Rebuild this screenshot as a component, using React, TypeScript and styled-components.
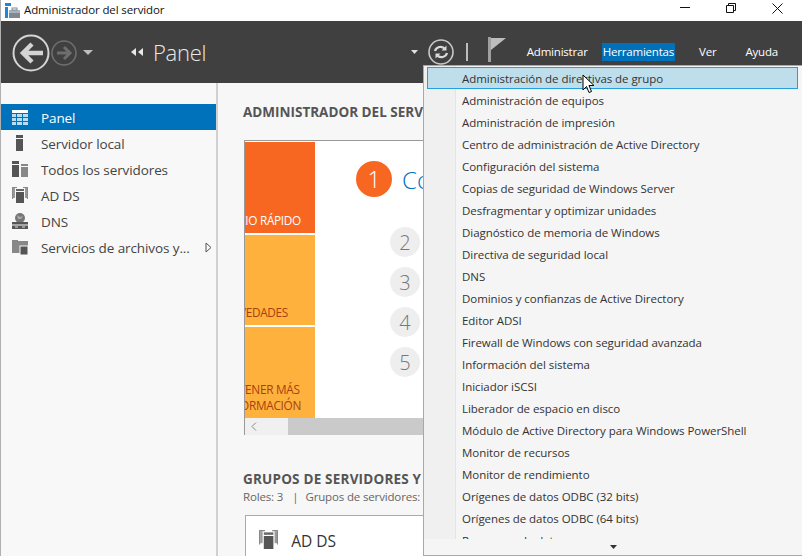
import React from "react";
import styled, { createGlobalStyle } from "styled-components";

const Global = createGlobalStyle`
  html, body { margin: 0; padding: 0; background: #fff; }
  body { font-family: "Open Sans", "Noto Sans", sans-serif; }
`;

const Frame = styled.div`
  position: relative;
  width: 802px;
  height: 556px;
  overflow: hidden;
  display: flex;
  flex-direction: column;
  background: #f5f5f5;
  border-left: 1px solid #b0b0b0;
  box-sizing: border-box;
`;

const TitleBar = styled.div`
  height: 21px;
  flex: none;
  background: #fff;
  display: flex;
  align-items: center;
  padding-left: 3px;
  gap: 4px;
  font-size: 11.5px;
  color: #111;
`;

const TitleText = styled.span`
  flex: 1;
  letter-spacing: -0.12px;
  padding-bottom: 2px;
`;

const WinControls = styled.div`
  display: flex;
  align-items: center;
  gap: 36px;
  padding: 0 19px 5px 0;
`;

const Header = styled.div`
  height: 62px;
  flex: none;
  background: #404040;
  display: flex;
  align-items: center;
  color: #fff;
  padding-left: 11px;
`;

const Nav = styled.div`
  display: flex;
  align-items: center;
  gap: 1px;
  width: 119px;
  margin-top: 1px;
`;

const NavCaret = styled.span`
  display: flex;
  margin-left: 5px;
`;

const Crumb = styled.div`
  display: flex;
  align-items: center;
  gap: 9px;
  flex: 1;
  font-size: 22px;
  font-weight: 300;
  color: #e8e8e8;
  letter-spacing: -0.25px;
`;

const ToolCaret = styled.div`
  display: flex;
  margin-right: 10px;
`;

const ToolSeparator = styled.div`
  display: flex;
  margin: 0 20px 0 12px;
`;

const Flag = styled.div`
  display: flex;
  margin-top: -5px;
`;

const Menu = styled.div`
  display: flex;
  align-items: center;
  margin-left: 20px;
  font-size: 11.5px;
  letter-spacing: -0.2px;
`;

const MenuLabel = styled.span<{ $active?: boolean; $gap: number }>`
  margin-right: ${(p) => p.$gap}px;
  padding: 0 1px;
  line-height: 18px;
  background: ${(p) => (p.$active ? "#0070b8" : "transparent")};
`;

const Body = styled.div`
  flex: 1;
  display: flex;
  min-height: 0;
`;

const Sidebar = styled.div`
  width: 215px;
  flex: none;
  background: #f8f8f8;
  border-right: 2px solid #d0d0d0;
  padding-top: 21px;
`;

const NavRow = styled.div<{ $active?: boolean }>`
  height: 26px;
  display: flex;
  align-items: center;
  color: ${(p) => (p.$active ? "#fff" : "#444")};
  background: ${(p) => (p.$active ? "#0072bc" : "transparent")};
  font-size: 13.5px;
  letter-spacing: -0.1px;
  padding-right: 4px;
`;

const NavIcon = styled.span`
  width: 40px;
  flex: none;
  display: flex;
  justify-content: center;
  padding-right: 3px;
  box-sizing: border-box;
`;

const NavText = styled.span`
  flex: 1;
  padding-top: 1px;
`;

const Main = styled.div`
  flex: 1;
  min-width: 0;
  padding: 20px 0 0 25px;
  overflow: hidden;
  background: #f7f7f7;
`;

const SectionTitle = styled.div`
  font-size: 13.5px;
  font-weight: 700;
  color: #555;
  white-space: nowrap;
  line-height: 18px;
`;

const Welcome = styled.div`
  margin: 19px 0 0 1px;
  width: 400px;
  height: 295px;
  border: 1px solid #999;
  box-sizing: border-box;
  display: flex;
  flex-direction: column;
  background: #fff;
`;

const WelcomeBody = styled.div`
  flex: 1;
  display: flex;
`;

const Tiles = styled.div`
  width: 70px;
  flex: none;
  display: flex;
  flex-direction: column;
  gap: 2px;
  padding-top: 1px;
`;

const Tile = styled.div<{ $h: number; $hot?: boolean; $pad: number }>`
  height: ${(p) => p.$h}px;
  flex: none;
  background: ${(p) => (p.$hot ? "#f76722" : "#ffb13d")};
  color: ${(p) => (p.$hot ? "#fff" : "#a5410f")};
  overflow: hidden;
  display: flex;
  justify-content: flex-end;
  align-items: flex-end;
  padding: 0 ${(p) => p.$pad}px 5px 0;
  box-sizing: border-box;
  font-size: 11.8px;
  line-height: 16px;
  letter-spacing: -0.3px;
  white-space: nowrap;
`;

const TileText = styled.div`
  flex: none;
  text-align: left;
`;

const Steps = styled.div`
  flex: 1;
  min-width: 0;
  padding: 20px 0 0 41px;
  overflow: hidden;
`;

const FirstStep = styled.div`
  display: flex;
  align-items: center;
  gap: 10px;
  color: #0072bc;
  font-size: 24px;
  font-weight: 300;
  height: 36px;
  white-space: nowrap;
`;

const Bullet = styled.div`
  width: 36px;
  height: 36px;
  flex: none;
  border-radius: 50%;
  background: #f76722;
  color: #fff;
  font-size: 23px;
  font-weight: 300;
  display: flex;
  align-items: center;
  justify-content: center;
`;

const StepList = styled.div`
  margin: 30px 0 0 34px;
  display: flex;
  flex-direction: column;
  gap: 10px;
`;

const StepDot = styled.div`
  width: 30px;
  height: 30px;
  border-radius: 50%;
  background: #eee;
  color: #777;
  font-size: 20px;
  font-weight: 300;
  display: flex;
  align-items: center;
  justify-content: center;
`;

const ScrollBar = styled.div`
  height: 17px;
  flex: none;
  display: flex;
  background: #cacaca;
`;

const ScrollThumb = styled.div`
  width: 43px;
  background: #f0f0f0;
  display: flex;
  align-items: center;
  padding-left: 6px;
  box-sizing: border-box;
`;

const GroupTitle = styled(SectionTitle)`
  margin-top: 35px;
  letter-spacing: 0.2px;
`;

const GroupMeta = styled.div`
  display: flex;
  font-size: 11.5px;
  color: #666;
  white-space: nowrap;
  letter-spacing: -0.15px;
  line-height: 18px;
`;

const MetaDivider = styled.span`
  margin: 0 7px 0 9px;
`;

const RoleCard = styled.div`
  margin: 9px 0 0 2px;
  width: 300px;
  height: 60px;
  background: #fff;
  border: 1px solid #aaa;
  box-sizing: border-box;
  display: flex;
  align-items: flex-start;
  gap: 13px;
  padding: 14px 13px;
  font-size: 15.5px;
  line-height: 23px;
  color: #333;
`;

const Dropdown = styled.div`
  position: absolute;
  left: 422px;
  top: 65px;
  width: 380px;
  height: 491px;
  background: #f5f5f5;
  border: 1px solid #a8a8a8;
  border-right: 0;
  box-sizing: border-box;
  display: flex;
  flex-direction: column;
`;

const DropdownList = styled.div`
  flex: none;
  height: 473px;
  overflow: hidden;
  background: linear-gradient(to right, #f0f0f0 31px, #e4e4e4 31px, #e4e4e4 32px, transparent 32px);
  padding-top: 1px;
  box-sizing: border-box;
`;

const DropdownItem = styled.div<{ $hover?: boolean }>`
  height: 22px;
  flex: none;
  display: flex;
  align-items: center;
  box-sizing: border-box;
  margin: 0 5px 0 3px;
  padding-left: 35px;
  font-size: 11.5px;
  letter-spacing: -0.05px;
  color: #333;
  white-space: nowrap;
  ${(p) => p.$hover && "background: #bfdeec; border: 1px solid #26a0da; padding-left: 34px;"}
`;

const DropdownMore = styled.div`
  flex: 1;
  display: flex;
  align-items: center;
  justify-content: center;
  padding-right: 1px;
`;

const Cursor = styled.svg`
  position: absolute;
  left: 581px;
  top: 74px;
`;

const tools = [
  "Administración de directivas de grupo",
  "Administración de equipos",
  "Administración de impresión",
  "Centro de administración de Active Directory",
  "Configuración del sistema",
  "Copias de seguridad de Windows Server",
  "Desfragmentar y optimizar unidades",
  "Diagnóstico de memoria de Windows",
  "Directiva de seguridad local",
  "DNS",
  "Dominios y confianzas de Active Directory",
  "Editor ADSI",
  "Firewall de Windows con seguridad avanzada",
  "Información del sistema",
  "Iniciador iSCSI",
  "Liberador de espacio en disco",
  "Módulo de Active Directory para Windows PowerShell",
  "Monitor de recursos",
  "Monitor de rendimiento",
  "Orígenes de datos ODBC (32 bits)",
  "Orígenes de datos ODBC (64 bits)",
  "Recuperar de datos",
];

const AppIcon = () => (
  <svg width="16" height="16" viewBox="0 0 16 16">
    <rect x="1" y="0" width="6" height="3" fill="#1e88d8" />
    <rect x="1" y="4" width="3" height="11" fill="#1e88d8" />
    <rect x="5" y="7" width="11" height="8" fill="#7d8a96" />
    <rect x="5" y="7" width="11" height="3" fill="#a9b4bd" />
    <rect x="8" y="5" width="5" height="2" fill="none" stroke="#7d8a96" />
  </svg>
);

const BackIcon = () => (
  <svg width="38" height="38" viewBox="0 0 38 38">
    <circle cx="19" cy="19" r="17.5" fill="none" stroke="#d4d4d4" strokeWidth="2" />
    <path d="M31 19H11M20 10l-9 9 9 9" fill="none" stroke="#d4d4d4" strokeWidth="4.5" />
  </svg>
);

const ForwardIcon = () => (
  <svg width="26" height="26" viewBox="0 0 26 26">
    <circle cx="13" cy="13" r="12" fill="none" stroke="#6e6e6e" strokeWidth="1.6" />
    <path d="M6 13h13M13 7l6 6-6 6" fill="none" stroke="#6e6e6e" strokeWidth="3" />
  </svg>
);

const Caret = ({ fill = "#bdbdbd", w = 10, h = 5 }: { fill?: string; w?: number; h?: number }) => (
  <svg width={w} height={h} viewBox="0 0 10 5" preserveAspectRatio="none">
    <path d="M0 0h10L5 5z" fill={fill} />
  </svg>
);

const RefreshIcon = () => (
  <svg width="26" height="26" viewBox="0 0 26 26">
    <circle cx="13" cy="13" r="12" fill="none" stroke="#c8c8c8" strokeWidth="1.6" />
    <path d="M7 12c1-4 7-6 10-2M19 14c-1 4-7 6-10 2" fill="none" stroke="#d8d8d8" strokeWidth="2.2" />
    <path d="M18.5 6.5v5h-5zM7.5 19.5v-5h5z" fill="#d8d8d8" />
  </svg>
);

const Separator = () => (
  <svg width="2" height="18" viewBox="0 0 2 18">
    <rect width="2" height="18" fill="#bdbdbd" />
  </svg>
);

const FlagIcon = () => (
  <svg width="18" height="25" viewBox="0 0 18 25">
    <rect x="0" y="0" width="3" height="25" fill="#a0a0a0" />
    <path d="M3 1h15L3 13z" fill="#bdbdbd" />
  </svg>
);

const PanelIcon = () => (
  <svg width="16" height="15" viewBox="0 0 16 15">
    <rect width="16" height="3" fill="#fff" />
    <path d="M0 4h4v3H0zM5 4h5v3H5zM11 4h5v3h-5zM0 8h4v3H0zM5 8h5v3H5zM11 8h5v3h-5zM0 12h4v3H0zM5 12h5v3H5zM11 12h5v3h-5z" fill="#b8dcf2" />
  </svg>
);

const ServerIcon = () => (
  <svg width="8" height="16" viewBox="0 0 8 16">
    <rect width="7" height="3" fill="#555" />
    <rect y="4" width="7" height="12" fill="#555" />
  </svg>
);

const AllServersIcon = () => (
  <svg width="16" height="16" viewBox="0 0 16 16">
    <rect width="7" height="3" fill="#555" />
    <rect y="4" width="7" height="12" fill="#555" />
    <rect x="9" y="3" width="7" height="2" fill="#888" />
    <rect x="9" y="6" width="7" height="10" fill="#888" />
  </svg>
);

const AdIcon = ({ scale = 1 }: { scale?: number }) => (
  <svg width={16 * scale} height={16 * scale} viewBox="0 0 16 16">
    <path d="M0 0h5v1H1v11H0zM11 0h5v12h-1V1h-4z" fill="#888" />
    <rect x="1" y="1" width="2" height="10" fill="#999" />
    <rect x="13" y="1" width="2" height="10" fill="#999" />
    <rect x="4" y="2" width="8" height="2" fill="#666" />
    <rect x="4" y="5" width="8" height="11" fill="#555" />
  </svg>
);

const DnsIcon = () => (
  <svg width="16" height="16" viewBox="0 0 16 16">
    <circle cx="8" cy="5" r="5" fill="#777" />
    <path d="M5 2l3 2 3-1-2 3-3 0z" fill="#aaa" />
    <rect y="9" width="16" height="7" fill="#555" />
    <rect y="11.5" width="16" height="1" fill="#f8f8f8" />
    <rect x="3" y="13.5" width="3" height="1" fill="#ddd" />
    <rect x="10" y="13.5" width="3" height="1" fill="#ddd" />
  </svg>
);

const FilesIcon = () => (
  <svg width="16" height="16" viewBox="0 0 16 16">
    <path d="M0 1h6v1h10v3H0z" fill="#888" />
    <rect y="4" width="16" height="10" fill="#888" />
    <rect x="8" y="7" width="8" height="9" fill="#555" stroke="#f8f8f8" />
  </svg>
);

const ExpandIcon = () => (
  <svg width="7" height="11" viewBox="0 0 7 11">
    <path d="M1 1l5 4.5L1 10z" fill="none" stroke="#555" />
  </svg>
);

const ChevronLeft = () => (
  <svg width="6" height="9" viewBox="0 0 6 9">
    <path d="M5 .5L1 4.5l4 4" fill="none" stroke="#888" />
  </svg>
);

const sideItems = [
  { label: "Panel", icon: <PanelIcon />, active: true },
  { label: "Servidor local", icon: <ServerIcon /> },
  { label: "Todos los servidores", icon: <AllServersIcon /> },
  { label: "AD DS", icon: <AdIcon /> },
  { label: "DNS", icon: <DnsIcon /> },
  { label: "Servicios de archivos y...", icon: <FilesIcon />, more: true },
];

export default function App() {
  return (
    <>
      <Global />
      <Frame>
        <TitleBar>
          <AppIcon />
          <TitleText>Administrador del servidor</TitleText>
          <WinControls>
            <svg width="10" height="2" viewBox="0 0 10 2"><rect width="10" height="1" fill="#111" /></svg>
            <svg width="10" height="10" viewBox="0 0 10 10">
              <path d="M2.5 2.5V.5h7v7h-2M.5 2.5h7v7h-7z" fill="none" stroke="#111" />
            </svg>
            <svg width="11" height="11" viewBox="0 0 11 11">
              <path d="M.5.5l10 10M10.5.5l-10 10" stroke="#111" />
            </svg>
          </WinControls>
        </TitleBar>
        <Header>
          <Nav>
            <BackIcon />
            <ForwardIcon />
            <NavCaret>
              <Caret />
            </NavCaret>
          </Nav>
          <Crumb>
            <svg width="13" height="8" viewBox="0 0 13 8">
              <path d="M5 0v8L0 4zM12 0v8L7 4z" fill="#e8e8e8" />
            </svg>
            Panel
          </Crumb>
          <ToolCaret>
            <Caret fill="#e0e0e0" w={7} h={4} />
          </ToolCaret>
          <RefreshIcon />
          <ToolSeparator>
            <Separator />
          </ToolSeparator>
          <Flag>
            <FlagIcon />
          </Flag>
          <Menu>
            <MenuLabel $gap={13}>Administrar</MenuLabel>
            <MenuLabel $gap={23} $active>Herramientas</MenuLabel>
            <MenuLabel $gap={27}>Ver</MenuLabel>
            <MenuLabel $gap={23}>Ayuda</MenuLabel>
          </Menu>
        </Header>
        <Body>
          <Sidebar>
            {sideItems.map((s) => (
              <NavRow key={s.label} $active={s.active}>
                <NavIcon>{s.icon}</NavIcon>
                <NavText>{s.label}</NavText>
                {s.more && <ExpandIcon />}
              </NavRow>
            ))}
          </Sidebar>
          <Main>
            <SectionTitle>ADMINISTRADOR DEL SERVIDOR</SectionTitle>
            <Welcome>
              <WelcomeBody>
                <Tiles>
                  <Tile $h={91} $hot $pad={14}>
                    <TileText>INICIO RÁPIDO</TileText>
                  </Tile>
                  <Tile $h={90} $pad={27}>
                    <TileText>NOVEDADES</TileText>
                  </Tile>
                  <Tile $h={91} $pad={14}>
                    <TileText>
                      OBTENER MÁS
                      <br />
                      INFORMACIÓN
                    </TileText>
                  </Tile>
                </Tiles>
                <Steps>
                  <FirstStep>
                    <Bullet>1</Bullet>
                    Configurar este servidor local
                  </FirstStep>
                  <StepList>
                    {[2, 3, 4, 5].map((n) => (
                      <StepDot key={n}>{n}</StepDot>
                    ))}
                  </StepList>
                </Steps>
              </WelcomeBody>
              <ScrollBar>
                <ScrollThumb>
                  <ChevronLeft />
                </ScrollThumb>
              </ScrollBar>
            </Welcome>
            <GroupTitle>GRUPOS DE SERVIDORES Y SERVIDORES</GroupTitle>
            <GroupMeta>
              Roles: 3
              <MetaDivider>|</MetaDivider>
              Grupos de servidores: 1
            </GroupMeta>
            <RoleCard>
              <AdIcon scale={1.2} />
              AD DS
            </RoleCard>
          </Main>
        </Body>
        <Dropdown>
          <DropdownList>
            {tools.map((t, i) => (
              <DropdownItem key={t} $hover={i === 0}>{t}</DropdownItem>
            ))}
          </DropdownList>
          <DropdownMore>
            <Caret fill="#333" w={7} h={4} />
          </DropdownMore>
        </Dropdown>
        <Cursor width="14" height="21" viewBox="0 0 14 21">
          <path d="M1 1v15l3.5-3.5 2.5 6 2.5-1-2.5-6H12z" fill="#fff" stroke="#000" strokeWidth="1" />
        </Cursor>
      </Frame>
    </>
  );
}
